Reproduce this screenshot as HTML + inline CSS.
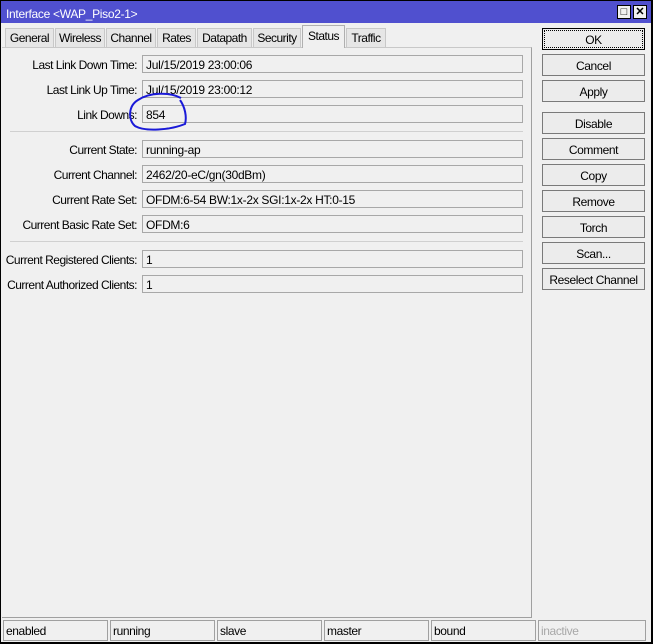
<!DOCTYPE html><html><head><style>
*{box-sizing:border-box;margin:0;padding:0}
body{width:653px;height:644px;background:#f0f0f0;font-family:"Liberation Sans",sans-serif;font-size:12px;color:#000;position:relative;overflow:hidden}
.a{position:absolute}
#win{left:0;top:0;width:653px;height:644px;border:1px solid #000;border-right:2px solid #000;border-bottom:2px solid #000}
#title{left:1px;top:1px;width:650px;height:22px;background:#5050cf;color:#fff;padding:6px 0 0 5px;font-size:12px;letter-spacing:-0.3px}
.tb{top:5px;width:14px;height:14px;background:#f0f0f0;border:1px solid #000;color:#000;font-size:11px;line-height:12px;text-align:center;font-weight:bold}
.tab{top:28px;height:19px;border:1px solid #c8c8c8;border-bottom:none;background:#e6e6e6;padding:2px 0 0 0;text-align:center;letter-spacing:-0.5px}
#panel{left:2px;top:47px;width:530px;height:571px;border:1px solid #a0a0a0;border-top:1px solid #c8c8c8;border-left:none;background:#f0f0f0}
.lb{width:137px;left:0;text-align:right;letter-spacing:-0.5px}
.f{left:142px;width:381px;height:18px;border:1px solid #a8a8a8;background:#f0f0f0;padding:2px 0 0 3px;letter-spacing:-0.3px}
.sep{left:10px;width:513px;height:1px;background:#d0d0d0}
.btn{left:542px;width:103px;height:22px;border:1px solid #7a7a7a;background:#ececec;text-align:center;padding-top:4px;letter-spacing:-0.4px}
.st{top:620px;height:21px;width:105px;border:1px solid #a0a0a0;padding:3px 0 0 2px;letter-spacing:-0.4px}
</style></head><body>
<div class="a" id="win"></div>
<div class="a" id="title">Interface &lt;WAP_Piso2-1&gt;</div>
<div class="a tb" style="left:617px">□</div>
<div class="a tb" style="left:633px">✕</div>
<div class="a tab" style="left:5px;width:49px">General</div>
<div class="a tab" style="left:55px;width:50px">Wireless</div>
<div class="a tab" style="left:106px;width:50px">Channel</div>
<div class="a tab" style="left:157px;width:39px">Rates</div>
<div class="a tab" style="left:197px;width:55px">Datapath</div>
<div class="a tab" style="left:253px;width:48px">Security</div>
<div class="a tab" style="left:302px;top:25px;height:23px;width:43px;background:#f0f0f0;border-color:#b0b0b0;z-index:2;padding-top:3px">Status</div>
<div class="a tab" style="left:346px;width:40px">Traffic</div>
<div class="a" id="panel"></div>

<div class="a lb" style="top:58px">Last Link Down Time:</div><div class="a f" style="top:55px">Jul/15/2019 23:00:06</div>
<div class="a lb" style="top:83px">Last Link Up Time:</div><div class="a f" style="top:80px">Jul/15/2019 23:00:12</div>
<div class="a lb" style="top:108px">Link Downs:</div><div class="a f" style="top:105px">854</div>
<div class="a sep" style="top:131px"></div>
<div class="a lb" style="top:143px">Current State:</div><div class="a f" style="top:140px">running-ap</div>
<div class="a lb" style="top:168px">Current Channel:</div><div class="a f" style="top:165px">2462/20-eC/gn(30dBm)</div>
<div class="a lb" style="top:193px">Current Rate Set:</div><div class="a f" style="top:190px">OFDM:6-54 BW:1x-2x SGI:1x-2x HT:0-15</div>
<div class="a lb" style="top:218px">Current Basic Rate Set:</div><div class="a f" style="top:215px">OFDM:6</div>
<div class="a sep" style="top:241px"></div>
<div class="a lb" style="top:253px">Current Registered Clients:</div><div class="a f" style="top:250px">1</div>
<div class="a lb" style="top:278px">Current Authorized Clients:</div><div class="a f" style="top:275px">1</div>

<svg class="a" style="left:125px;top:92px" width="65" height="40"><path d="M56 6 C45 0 25 0 13 8 C3 14 3 28 10 34 C20 40 45 38 60 32 C62 25 60 15 55 8" fill="none" stroke="#1a1ad8" stroke-width="2"/></svg>

<div class="a btn" style="top:28px;border:1px solid #000;outline:1px dotted #000;outline-offset:-3px">OK</div>
<div class="a btn" style="top:54px">Cancel</div>
<div class="a btn" style="top:80px">Apply</div>
<div class="a btn" style="top:112px">Disable</div>
<div class="a btn" style="top:138px">Comment</div>
<div class="a btn" style="top:164px">Copy</div>
<div class="a btn" style="top:190px">Remove</div>
<div class="a btn" style="top:216px">Torch</div>
<div class="a btn" style="top:242px">Scan...</div>
<div class="a btn" style="top:268px">Reselect Channel</div>

<div class="a st" style="left:3px">enabled</div>
<div class="a st" style="left:110px">running</div>
<div class="a st" style="left:217px">slave</div>
<div class="a st" style="left:324px">master</div>
<div class="a st" style="left:431px">bound</div>
<div class="a st" style="left:538px;width:108px;color:#a8a8a8">inactive</div>
</body></html>
